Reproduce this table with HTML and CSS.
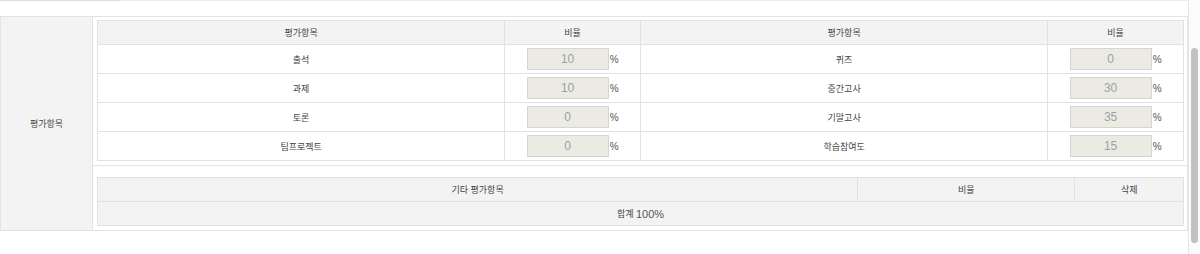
FILE: index.html
```html
<!DOCTYPE html>
<html lang="ko">
<head>
<meta charset="utf-8">
<title>평가항목</title>
<link rel="stylesheet" href="styles.css">
</head>
<body>
<div class="page">
  <div class="main">
    <div class="topbar"><div class="tab"></div><div class="line"></div></div>
    <div class="eval">
      <div class="label">평가항목</div>
      <div class="body">
        <div class="sec1">
          <div class="grid g1">
            <div class="cell th">평가항목</div>
            <div class="cell th">비율</div>
            <div class="cell th">평가항목</div>
            <div class="cell th">비율</div>

            <div class="cell">출석</div>
            <div class="cell"><input class="rate" value="10" disabled><span class="pct">%</span></div>
            <div class="cell">퀴즈</div>
            <div class="cell"><input class="rate" value="0" disabled><span class="pct">%</span></div>

            <div class="cell">과제</div>
            <div class="cell"><input class="rate" value="10" disabled><span class="pct">%</span></div>
            <div class="cell">중간고사</div>
            <div class="cell"><input class="rate" value="30" disabled><span class="pct">%</span></div>

            <div class="cell">토론</div>
            <div class="cell"><input class="rate" value="0" disabled><span class="pct">%</span></div>
            <div class="cell">기말고사</div>
            <div class="cell"><input class="rate" value="35" disabled><span class="pct">%</span></div>

            <div class="cell">팀프로젝트</div>
            <div class="cell"><input class="rate" value="0" disabled><span class="pct">%</span></div>
            <div class="cell">학습참여도</div>
            <div class="cell"><input class="rate" value="15" disabled><span class="pct">%</span></div>
          </div>
        </div>
        <div class="sec2">
          <div class="grid g2">
            <div class="cell th">기타 평가항목</div>
            <div class="cell th">비율</div>
            <div class="cell th">삭제</div>
            <div class="cell th total">합계&nbsp;<span class="num">100%</span></div>
          </div>
        </div>
      </div>
    </div>
  </div>
  <div class="scrollbar"><div class="thumb"></div></div>
</div>
</body>
</html>
```

FILE: styles.css
```css
html, body {
  margin: 0;
  padding: 0;
  background: #ffffff;
}

body {
  font-family: "Liberation Sans", "Noto Sans CJK KR", sans-serif;
  color: #444444;
}

.page {
  display: flex;
  height: 254px;
  overflow: hidden;
}

.main {
  flex: 1;
  min-width: 0;
}

.topbar {
  display: flex;
  height: 1px;
  margin-bottom: 15px;
}

.tab {
  width: 120px;
  background: #dedede;
}

.line {
  flex: 1;
  background: #ececec;
}

.eval {
  display: flex;
  border: 1px solid #e3e3e3;
}

.label {
  width: 92px;
  flex: none;
  box-sizing: border-box;
  border-right: 1px solid #e3e3e3;
  background: #f3f3f3;
  display: flex;
  align-items: center;
  justify-content: center;
  font-size: 9px;
}

.body {
  flex: 1;
  min-width: 0;
}

.sec1 {
  padding: 3px 3px 4px 4px;
  border-bottom: 1px solid #e3e3e3;
}

.sec2 {
  padding: 11px 3px 4px 4px;
}

.grid {
  display: grid;
  border-top: 1px solid #e2e2e2;
  border-left: 1px solid #e2e2e2;
}

.g1 {
  grid-template-columns: 3fr 1fr 3fr 1fr;
  grid-template-rows: 24px;
  grid-auto-rows: 29px;
}

.g2 {
  grid-template-columns: 7fr 2fr 1fr;
  grid-auto-rows: 24px;
}

.cell {
  border-right: 1px solid #e2e2e2;
  border-bottom: 1px solid #e2e2e2;
  display: flex;
  align-items: center;
  justify-content: center;
  font-size: 9px;
  min-width: 0;
}

.th {
  background: #f3f3f3;
}

.total {
  grid-column: 1 / -1;
}

.num {
  font-size: 11px;
  color: #555555;
}

.rate {
  width: 82px;
  height: 22px;
  box-sizing: border-box;
  margin: 0;
  padding: 0;
  border: 1px solid #d6d6cf;
  background: #ebebe4;
  color: #9da0a4;
  font-family: "Liberation Sans", sans-serif;
  font-size: 12px;
  text-align: center;
  opacity: 1;
  -webkit-text-fill-color: #9da0a4;
}

.pct {
  font-size: 10px;
  margin-left: 1px;
  width: 9px;
  color: #555555;
}

.scrollbar {
  width: 12px;
  flex: none;
  box-sizing: border-box;
  border-left: 1px solid #e6e6e6;
  background: #fbfbfb;
  padding: 48px 0 0 2px;
}

.thumb {
  width: 7px;
  height: 195px;
  background: #c1c1c1;
  border-radius: 4px;
}
```
